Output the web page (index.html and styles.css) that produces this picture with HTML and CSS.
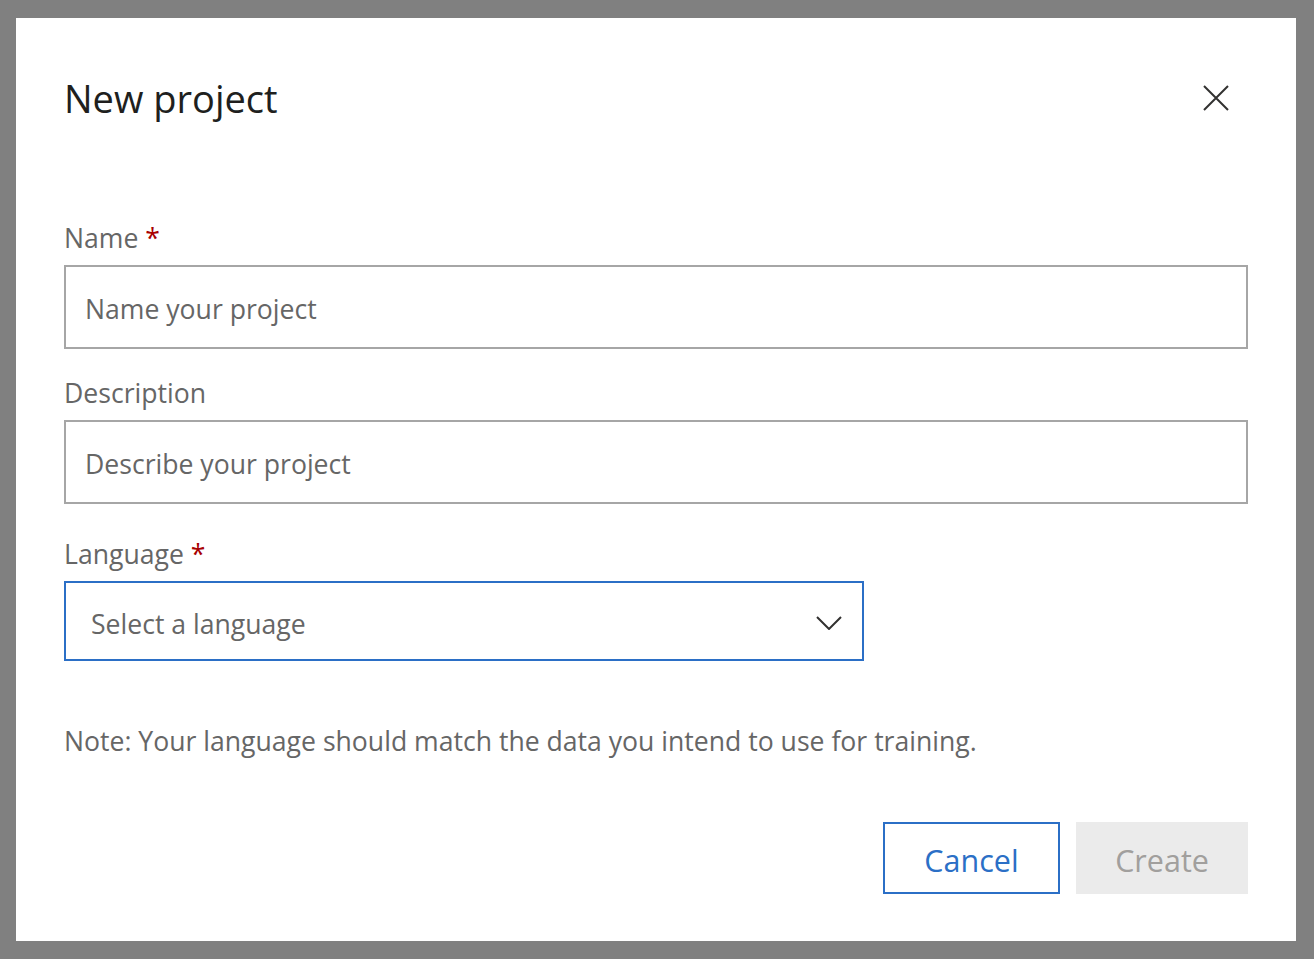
FILE: index.html
```html
<!DOCTYPE html>
<html>
<head>
<meta charset="utf-8">
<link rel="stylesheet" href="styles.css">
</head>
<body>
<div class="dialog">
  <div class="header">
    <h1 class="title">New project</h1>
    <button class="close" aria-label="Close">
      <svg width="26" height="26" viewBox="0 0 26 26"><path d="M1 1 L25 25 M25 1 L1 25" stroke="#323130" stroke-width="2" fill="none"/></svg>
    </button>
  </div>
  <div class="field field-name">
    <label class="label">Name <span class="req">*</span></label>
    <div class="input">Name your project</div>
  </div>
  <div class="field field-desc">
    <label class="label">Description</label>
    <div class="input">Describe your project</div>
  </div>
  <div class="field field-lang">
    <label class="label">Language <span class="req">*</span></label>
    <div class="select">
      <span>Select a language</span>
      <svg class="chev" width="26" height="14" viewBox="0 0 26 14"><path d="M1 1 L13 13 L25 1" stroke="#323130" stroke-width="2" fill="none"/></svg>
    </div>
  </div>
  <p class="note">Note: Your language should match the data you intend to use for training.</p>
  <div class="footer">
    <button class="btn btn-cancel">Cancel</button>
    <button class="btn btn-create">Create</button>
  </div>
</div>
</body>
</html>
```
FILE: styles.css
```css
html, body { margin: 0; padding: 0; }
body {
  background: #808080;
  width: 1314px;
  height: 959px;
  padding: 18px 18px 18px 16px;
  box-sizing: border-box;
  font-family: "Segoe UI", "Open Sans", sans-serif;
}
.dialog {
  background: #fff;
  width: 1280px;
  height: 923px;
  box-sizing: border-box;
  padding: 0 48px;
  display: flex;
  flex-direction: column;
}
.header {
  display: flex;
  justify-content: space-between;
  align-items: center;
  height: 160px;
}
.title {
  margin: 0;
  font-weight: 400;
  font-size: 38px;
  color: #201f1e;
}
.close {
  border: 0;
  background: none;
  padding: 0;
  margin-right: 19px;
  width: 26px;
  height: 26px;
  display: flex;
}
.field { display: flex; flex-direction: column; }
.label {
  font-size: 26.6px;
  color: #666666;
  line-height: 36px;
  margin-bottom: 9px;
}
.req { color: #a80000; }
.input {
  height: 84px;
  box-sizing: border-box;
  border: 2px solid #a6a6a6;
  display: flex;
  align-items: center;
  padding: 4px 0 0 19px;
  font-size: 26.6px;
  color: #666666;
}
.field-name { margin-top: 42px; }
.field-desc { margin-top: 26px; }
.field-lang { margin-top: 32px; }
.select {
  width: 800px;
  height: 80px;
  box-sizing: border-box;
  border: 2px solid #2b6fc6;
  display: flex;
  align-items: center;
  justify-content: space-between;
  padding: 5px 20px 0 25px;
  font-size: 26.6px;
  color: #666666;
}
.chev { margin-top: -1px; }
.note {
  margin: 62px 0 0;
  font-size: 26.6px;
  color: #666666;
  line-height: 36px;
}
.footer {
  margin-top: 63px;
  display: flex;
  justify-content: flex-end;
  gap: 16px;
}
.btn {
  height: 72px;
  font-family: inherit;
  font-size: 30.5px;
  padding: 4px 0 0;
  box-sizing: border-box;
}
.btn-cancel {
  width: 177px;
  background: #fff;
  border: 2px solid #2b6fc6;
  color: #2b6fc6;
}
.btn-create {
  width: 172px;
  background: #ebebeb;
  border: 0;
  color: #a19f9d;
}
```
